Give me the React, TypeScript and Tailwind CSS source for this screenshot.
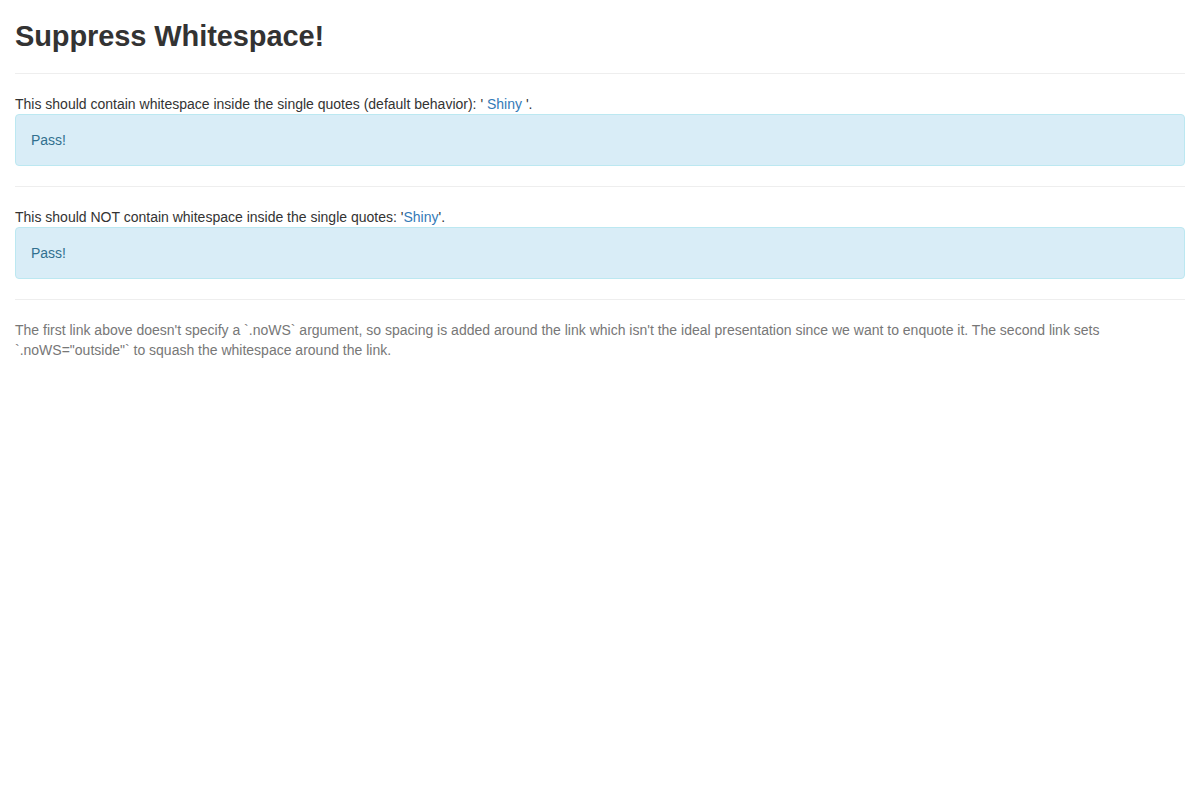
export default function App() {
  return (
    <div className="min-h-screen bg-white px-[15px] text-[14px] leading-[20px] text-[#333] [font-family:'Liberation_Sans',Arial,sans-serif]">
      <h2 className="mt-[20px] mb-[10px] text-[29px] leading-[33px] font-bold tracking-[-0.1px]">Suppress Whitespace!</h2>
      <hr className="my-[20px] border-t border-[#eee]" />
      <div>
        This should contain whitespace inside the single quotes (default behavior): '{" "}
        <a href="#" className="text-[#337ab7]">Shiny</a> '.
      </div>
      <div className="mb-[20px] rounded-[4px] border border-[#bce8f1] bg-[#d9edf7] p-[15px] text-[#31708f]">Pass!</div>
      <hr className="my-[20px] border-t border-[#eee]" />
      <div>
        This should NOT contain whitespace inside the single quotes: '<a href="#" className="text-[#337ab7]">Shiny</a>'.
      </div>
      <div className="mb-[20px] rounded-[4px] border border-[#bce8f1] bg-[#d9edf7] p-[15px] text-[#31708f]">Pass!</div>
      <hr className="my-[20px] border-t border-[#eee]" />
      <p className="mb-[10px] text-[#777]">
        The first link above doesn't specify a `.noWS` argument, so spacing is added around the link which isn't the ideal presentation since we want to enquote it. The second link sets `.noWS="outside"` to squash the whitespace around the link.
      </p>
    </div>
  );
}
